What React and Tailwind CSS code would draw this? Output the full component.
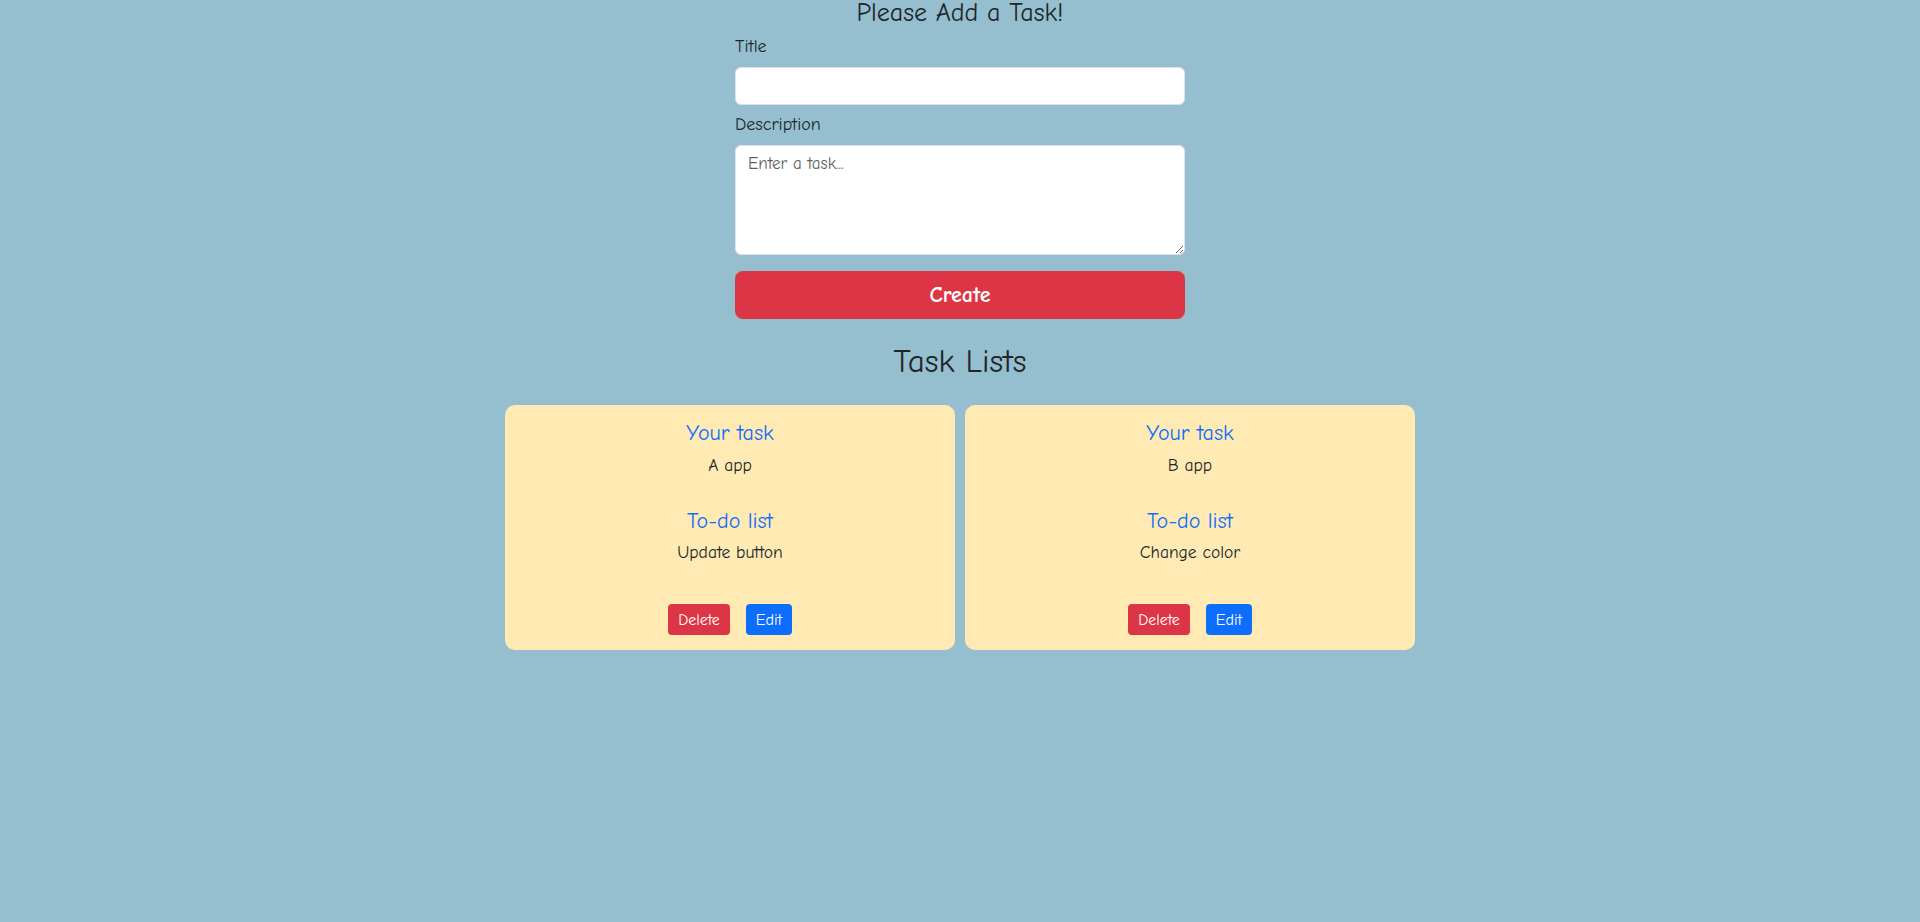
import React, { useState } from 'react';

const font = "font-['Comic_Sans_MS','Comic_Neue','DejaVu_Sans',sans-serif]";

const TaskCard = ({ task, onDelete }) => (
    <div className="w-[450px] h-[245px] bg-[#ffeab4] rounded-[10px] px-4 pt-4 flex flex-col items-center text-center">
        <h5 className="text-[22px] leading-[24px] text-[#0d6efd]">Your task</h5>
        <p className="mt-2 text-[17.5px] leading-[24px] text-[#212529]">{task.title}</p>
        <h5 className="mt-8 text-[22px] leading-[24px] text-[#0d6efd]">To-do list</h5>
        <p className="mt-[7px] text-[17.5px] leading-[24px] text-[#212529]">{task.description}</p>
        <div className="mt-10 flex gap-4">
            <button
                onClick={onDelete}
                className="h-[31px] w-[62px] rounded-[4px] bg-[#dc3545] text-white text-[16px]"
            >
                Delete
            </button>
            <button className="h-[31px] w-[46px] rounded-[4px] bg-[#0d6efd] text-white text-[16px]">
                Edit
            </button>
        </div>
    </div>
);

const App = () => {
    const [tasks, setTasks] = useState([
        { id: 1, title: 'A app', description: 'Update button' },
        { id: 2, title: 'B app', description: 'Change color' },
    ]);
    const [title, setTitle] = useState('');
    const [description, setDescription] = useState('');

    const handleCreate = (e) => {
        e.preventDefault();
        if (!title) return;
        setTasks([...tasks, { id: Date.now(), title, description }]);
        setTitle('');
        setDescription('');
    };

    return (
        <div className={`min-h-[922px] bg-[#95bfcf] text-[#212529] ${font}`}>
            <form onSubmit={handleCreate} className="w-[450px] mx-auto flex flex-col">
                <h1 className="text-center text-[26px] leading-[26px]">Please Add a Task!</h1>
                <label className="mt-[9px] mb-2 text-[18px] leading-[24px]">Title</label>
                <input
                    value={title}
                    onChange={(e) => setTitle(e.target.value)}
                    className="h-[38px] bg-white border border-[#dee2e6] rounded-[6px] px-3 text-[17px] outline-none"
                />
                <label className="mt-2 mb-2 text-[18px] leading-[24px]">Description</label>
                <textarea
                    value={description}
                    onChange={(e) => setDescription(e.target.value)}
                    placeholder="Enter a task..."
                    className="h-[110px] bg-white border border-[#dee2e6] rounded-[6px] px-3 py-[6px] text-[17px] leading-[24px] outline-none placeholder:text-[#5c5f63]"
                />
                <button
                    type="submit"
                    className="mt-4 h-[48px] rounded-[8px] bg-[#dc3545] text-white text-[22px] font-bold"
                >
                    Create
                </button>
            </form>

            <h2 className="mt-6 text-center text-[33px] leading-[36px]">Task Lists</h2>

            <div className="mt-[26px] flex justify-center gap-[10px]">
                {tasks.map((task) => (
                    <TaskCard
                        key={task.id}
                        task={task}
                        onDelete={() => setTasks(tasks.filter((t) => t.id !== task.id))}
                    />
                ))}
            </div>
        </div>
    );
};

export default App;
